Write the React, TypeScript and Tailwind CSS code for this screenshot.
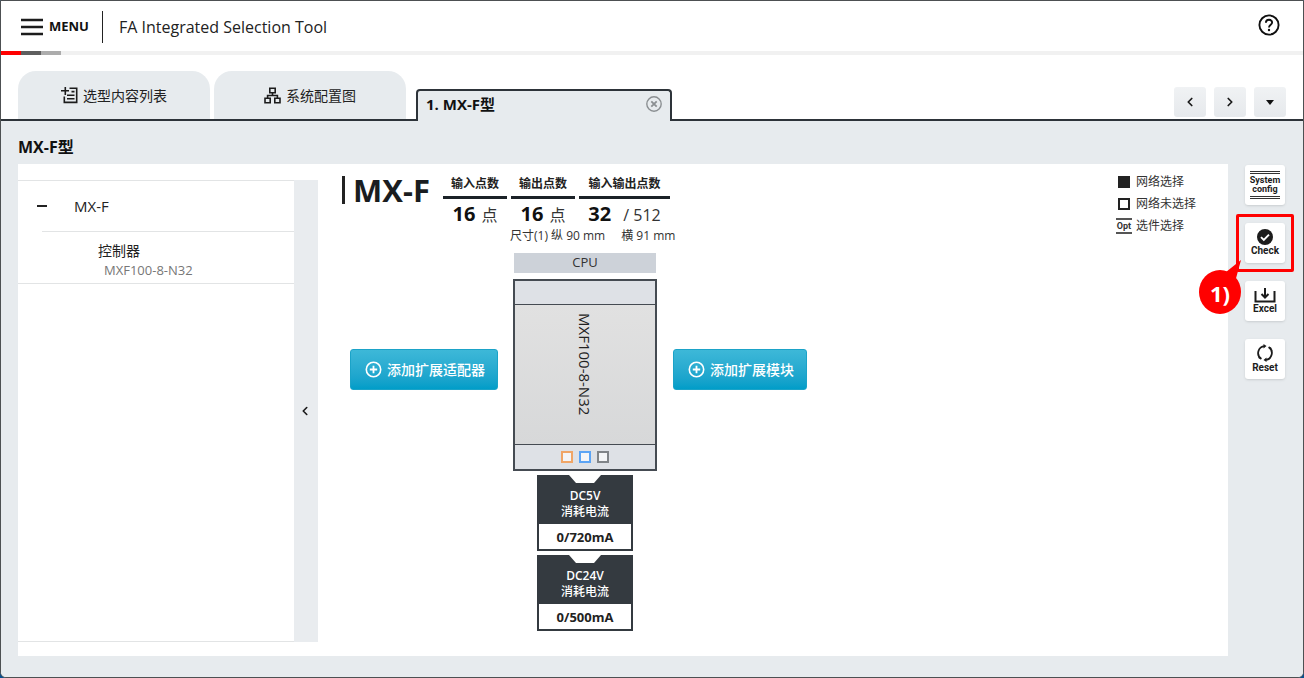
import type { ReactNode } from "react";
import { ChevronLeft, ChevronRight } from "lucide-react";

type Stat = { label: string; value: string; unit: string; cls: string; gap: string };

const STATS: Stat[] = [
  { label: "输入点数", value: "16", unit: "点", cls: "w-16", gap: "mr-1.5" },
  { label: "输出点数", value: "16", unit: "点", cls: "w-16", gap: "mr-1.5" },
  { label: "输入输出点数", value: "32", unit: "/ 512", cls: "w-[91px]", gap: "mr-3" },
];

const POWER = [
  { name: "DC5V", value: "0/720mA" },
  { name: "DC24V", value: "0/500mA" },
];

const navBtn = "flex h-[30px] w-8 items-center justify-center rounded-[3px] bg-gradient-to-b from-[#f0f2f4] to-[#e6e9ec] text-[#1a1a1a]";
const tabBtn = "flex h-12 w-48 items-center justify-center gap-[5px] rounded-t-[18px] bg-[#e7ebee] text-[14px] text-[#222]";
const toolBtn = "flex h-10 w-10 flex-col items-center justify-center rounded-[3px] bg-white font-['Roboto',sans-serif] text-[10px] leading-3 font-bold text-[#1c1c1c] shadow-sm";

function ListIcon() {
  return (
    <svg width="17" height="17" viewBox="0 0 17 17" fill="none" stroke="#1c1c1c" strokeWidth="1.6">
      <path d="M8.5 1.2h7.2v14.2H3.3V9.5M4.3 0v8M0 3.8h8M10.5 4.6h3M6 8.3h7.5M6 11.8h7.5" />
    </svg>
  );
}

function TreeIcon() {
  return (
    <svg width="17" height="17" viewBox="0 0 17 17" fill="none" stroke="#1c1c1c" strokeWidth="1.6">
      <path d="M5.8 1.3h5.4v4.4H5.8zM1 11.3h5.2v4.4H1zM10.8 11.3H16v4.4h-5.2zM8.5 5.7v2.8M3.6 11.3V8.5h9.8v2.8" />
    </svg>
  );
}

function AddButton({ children }: { children: ReactNode }) {
  return (
    <button className="mt-24 flex h-[41px] shrink-0 items-center gap-[5px] rounded-[3px] border border-[#1ba3c8] bg-gradient-to-b from-[#3db8d8] to-[#009dc8] pr-3 pl-3.5 text-[14px] font-medium whitespace-nowrap text-white">
      <svg width="17" height="17" viewBox="0 0 17 17" fill="none" stroke="#fff" strokeWidth="1.6">
        <circle cx="8.5" cy="8.5" r="7.2" />
        <path d="M8.5 4.8v7.4M4.8 8.5h7.4" strokeWidth="1.8" />
      </svg>
      {children}
    </button>
  );
}

function Header() {
  return (
    <header>
      <div className="flex h-[50px] items-center pt-0.5 pr-[23px] pl-5">
        <button className="flex items-center gap-1.5 text-[13px] font-bold text-[#111]">
          <svg width="22" height="18" viewBox="0 0 22 18" stroke="#1c1c1c" strokeWidth="2.4">
            <path d="M0 2h22M0 9h22M0 16h22" />
          </svg>
          MENU
        </button>
        <span className="ml-[13px] h-8 border-l border-[#222]" />
        <h1 className="ml-4 text-[16px] text-[#222]">FA Integrated Selection Tool</h1>
        <button className="mb-1 ml-auto" aria-label="Help">
          <svg width="22" height="22" viewBox="0 0 22 22" fill="none" stroke="#111" strokeWidth="1.9">
            <circle cx="11" cy="11" r="9.6" />
            <path d="M7.9 8.8c0-1.8 1.3-3 3.1-3s3.1 1.2 3.1 2.8c0 2.1-3.1 2.4-3.1 4.9" />
            <circle cx="11" cy="16" r="1.2" fill="#111" stroke="none" />
          </svg>
        </button>
      </div>
      <div className="flex h-1 bg-[#f1f1f1]">
        <span className="w-5 bg-[#ff0000]" />
        <span className="w-5 bg-[#5f5f5f]" />
        <span className="w-5 bg-[#acacac]" />
      </div>
    </header>
  );
}

function TabBar() {
  return (
    <nav className="flex h-[66px] items-end">
      <div className="flex gap-1 border-b-2 border-[#2d3339] pr-2.5 pl-[17px]">
        <button className={tabBtn}><ListIcon />选型内容列表</button>
        <button className={tabBtn}><TreeIcon />系统配置图</button>
      </div>
      <div className="flex h-8 w-64 items-center justify-between rounded-t-[4px] border-2 border-b-0 border-[#2d3339] bg-[#e7ebee] px-2 pb-1">
        <button className="text-[15px] leading-6 font-bold text-[#111]">1. MX-F型</button>
        <button aria-label="Close tab">
          <svg width="16" height="16" viewBox="0 0 16 16" fill="none" stroke="#8b8f92" strokeWidth="1.4">
            <circle cx="8" cy="8" r="7.2" />
            <path d="M5.3 5.3l5.4 5.4M10.7 5.3l-5.4 5.4" strokeWidth="1.8" />
          </svg>
        </button>
      </div>
      <div className="flex flex-1 justify-end gap-2 border-b-2 border-[#2d3339] pr-[17px] pb-0.5">
        <button className={navBtn} aria-label="Previous"><ChevronLeft size={14} strokeWidth={3} /></button>
        <button className={navBtn} aria-label="Next"><ChevronRight size={14} strokeWidth={3} /></button>
        <button className={navBtn} aria-label="Tab list">
          <svg width="8" height="5" viewBox="0 0 8 5"><path d="M0 0h8L4 5z" fill="#111" /></svg>
        </button>
      </div>
    </nav>
  );
}

function Sidebar() {
  return (
    <aside className="flex w-[300px] shrink-0 pt-4 pb-3.5">
      <div className="flex-1 border-y border-[#e2e4e5]">
        <div className="flex h-[50px] items-center pl-[19px]">
          <button className="flex w-[37px] items-center" aria-label="Collapse MX-F">
            <span className="h-0.5 w-2.5 bg-[#222]" />
          </button>
          <span className="text-[15px] text-[#222]">MX-F</span>
        </div>
        <div className="ml-6 border-t border-[#e2e4e5]" />
        <div className="h-[52px] border-b border-[#e2e4e5] pt-2.5 pl-20">
          <p className="text-[14px] leading-[18px] text-[#222]">控制器</p>
          <p className="pl-1.5 text-[13px] leading-5 text-[#777]">MXF100-8-N32</p>
        </div>
      </div>
      <button className="flex w-6 items-center justify-center bg-[#e9ecef] pr-0.5" aria-label="Collapse panel">
        <ChevronLeft size={14} strokeWidth={2.8} className="text-[#1a1a1a]" />
      </button>
    </aside>
  );
}

function Unit() {
  return (
    <div className="flex w-36 shrink-0 flex-col items-center">
      <div className="flex h-5 w-[142px] items-center justify-center bg-[#cdd2d9] text-[13px] text-[#333]">CPU</div>
      <div className="mt-1.5 flex h-48 w-full flex-col border-2 border-[#454b52] bg-[#dee1e6]">
        <div className="h-6 border-b border-[#454b52]" />
        <div className="flex flex-1 justify-center bg-gradient-to-b from-[#e1e1e1] to-[#d7d8d9] pt-2 text-[15px] leading-5 text-[#222]">
          <span className="[writing-mode:vertical-rl]">MXF100-8-N32</span>
        </div>
        <div className="flex h-[25px] items-center justify-center gap-1.5 border-t border-[#454b52]">
          <span className="size-3 border-2 border-[#f0a566] bg-[#f4f5f7]" />
          <span className="size-3 border-2 border-[#5ba4f5] bg-[#f4f5f7]" />
          <span className="size-3 border-2 border-[#808488] bg-[#f4f5f7]" />
        </div>
      </div>
      {POWER.map((p) => (
        <div key={p.name} className="mt-1 h-[76px] w-24 border-2 border-t-0 border-[#343a40] bg-white text-center">
          <div className="flex h-[49px] flex-col items-center bg-[#343a40] text-[12px] leading-4 font-semibold text-white">
            <svg width="32" height="8" viewBox="0 0 32 8" className="mb-[5px] shrink-0">
              <path d="M0 0h32l-7 8H7z" fill="#fff" />
            </svg>
            <span>{p.name}</span>
            <span className="font-medium">消耗电流</span>
          </div>
          <div className="text-[13px] leading-[26px] font-bold text-[#222]">{p.value}</div>
        </div>
      ))}
    </div>
  );
}

function Legend() {
  return (
    <ul className="mr-8 ml-auto shrink-0 pt-px text-[12px] leading-[22px] text-[#333]">
      <li className="flex items-center gap-1">
        <span className="flex w-4 justify-center"><span className="size-3 bg-[#222]" /></span>网络选择
      </li>
      <li className="flex items-center gap-1">
        <span className="flex w-4 justify-center"><span className="size-3 border-2 border-[#222]" /></span>网络未选择
      </li>
      <li className="flex items-center gap-1">
        <span className="w-4 border-y-2 border-[#555] text-center font-['Roboto',sans-serif] text-[9px] leading-3 font-bold">Opt</span>选件选择
      </li>
    </ul>
  );
}

function Canvas() {
  return (
    <section className="flex min-w-0 flex-1 flex-col pl-6">
      <div className="flex h-[89px] items-start pt-1.5">
        <span className="mt-1.5 h-7 w-[3px] bg-[#222]" />
        <h3 className="ml-2 w-[90px] text-[31px] leading-10 font-bold whitespace-nowrap text-[#1a1d20]">MX-F</h3>
        <div className="pt-1">
          <div className="flex gap-1">
            {STATS.map((s) => (
              <div key={s.label} className={`${s.cls} text-center`}>
                <p className="border-b-3 border-[#1b2228] pb-0.5 text-[12px] leading-5 font-bold whitespace-nowrap text-[#222]">{s.label}</p>
                <p className="text-[16px] leading-[30px] whitespace-nowrap text-[#333]">
                  <b className={`${s.gap} text-[20px] text-[#111]`}>{s.value}</b>
                  {s.unit}
                </p>
              </div>
            ))}
          </div>
          <p className="-mt-0.5 pl-[67px] text-[12px] leading-4 whitespace-nowrap text-[#333]">
            尺寸(1) 纵 90 mm<span className="ml-4">横 91 mm</span>
          </p>
        </div>
        <Legend />
      </div>
      <div className="flex items-start pl-2">
        <AddButton>添加扩展适配器</AddButton>
        <div className="ml-[15px]"><Unit /></div>
        <div className="ml-4"><AddButton>添加扩展模块</AddButton></div>
      </div>
    </section>
  );
}

function Toolbar() {
  return (
    <div className="flex shrink-0 flex-col gap-[18px] pt-px pr-[18px] pl-[17px]">
      <button className={toolBtn}>
        <span className="flex h-7 w-[30px] flex-col items-center justify-between text-[9px] leading-[9px]">
          <span className="h-[3px] w-full border-y border-[#333]" />
          <span>System</span>
          <span className="-mt-0.5">config</span>
          <span className="h-[3px] w-full border-y border-[#333]" />
        </span>
      </button>
      <div className="relative">
        <button className={toolBtn}>
          <svg width="16" height="16" viewBox="0 0 16 16">
            <circle cx="8" cy="8" r="8" fill="#1c1c1c" />
            <path d="M4 8.2l2.8 2.8L12 5.6" fill="none" stroke="#fff" strokeWidth="1.9" />
          </svg>
          Check
        </button>
        <div className="pointer-events-none absolute -inset-[9px] rounded-[2px] border-3 border-[#ff0000]" />
        <div className="pointer-events-none absolute top-[37px] -left-[46px] h-[54px] w-[42px] pt-3">
          <svg width="43" height="54" viewBox="0 0 43 54" className="absolute top-0 left-0">
            <path d="M42 0L22 16l14 6z" fill="#f00" />
            <ellipse cx="21" cy="32" rx="21" ry="22" fill="#f00" />
          </svg>
          <span className="relative block text-center text-[22px] leading-[42px] font-bold text-white">1)</span>
        </div>
      </div>
      <button className={toolBtn}>
        <svg width="22" height="15" viewBox="0 0 22 15" fill="none" stroke="#1c1c1c" strokeWidth="2">
          <path d="M1.5 3v10.5h19V3M11 0v9M7.5 6l3.5 3.5L14.5 6" />
        </svg>
        Excel
      </button>
      <button className={toolBtn}>
        <svg width="18" height="18" viewBox="0 0 18 18" fill="none" stroke="#1c1c1c" strokeWidth="1.8">
          <path d="M5.2 14.7A6.9 6.9 0 0 1 8.6 2.1M12.8 3.3a6.9 6.9 0 0 1-3.4 12.6" />
          <path d="M7.5 0l3 2.1-3 2.4zM10.5 13.5l-3 2.4 3 2.1z" fill="#1c1c1c" stroke="none" />
          <path d="M2.5 13.3l2.9 1.5M15.5 4.7l-2.9-1.5" strokeWidth="1.4" />
        </svg>
        Reset
      </button>
    </div>
  );
}

export default function App() {
  return (
    <div className="min-h-screen bg-[#0a4f8c] font-['Open_Sans','Noto_Sans_CJK_SC',sans-serif]">
      <div className="flex min-h-screen flex-col overflow-hidden rounded-b-[6px] border border-[#4d5052] bg-white">
        <Header />
        <TabBar />
        <main className="flex flex-1 flex-col bg-[#e7ebee] pb-[21px] pl-[17px]">
          <h2 className="pt-3.5 pb-[5px] text-[16px] leading-6 font-bold text-[#111]">MX-F型</h2>
          <div className="flex flex-1">
            <div className="flex min-w-0 flex-1 bg-white">
              <Sidebar />
              <Canvas />
            </div>
            <Toolbar />
          </div>
        </main>
      </div>
    </div>
  );
}
